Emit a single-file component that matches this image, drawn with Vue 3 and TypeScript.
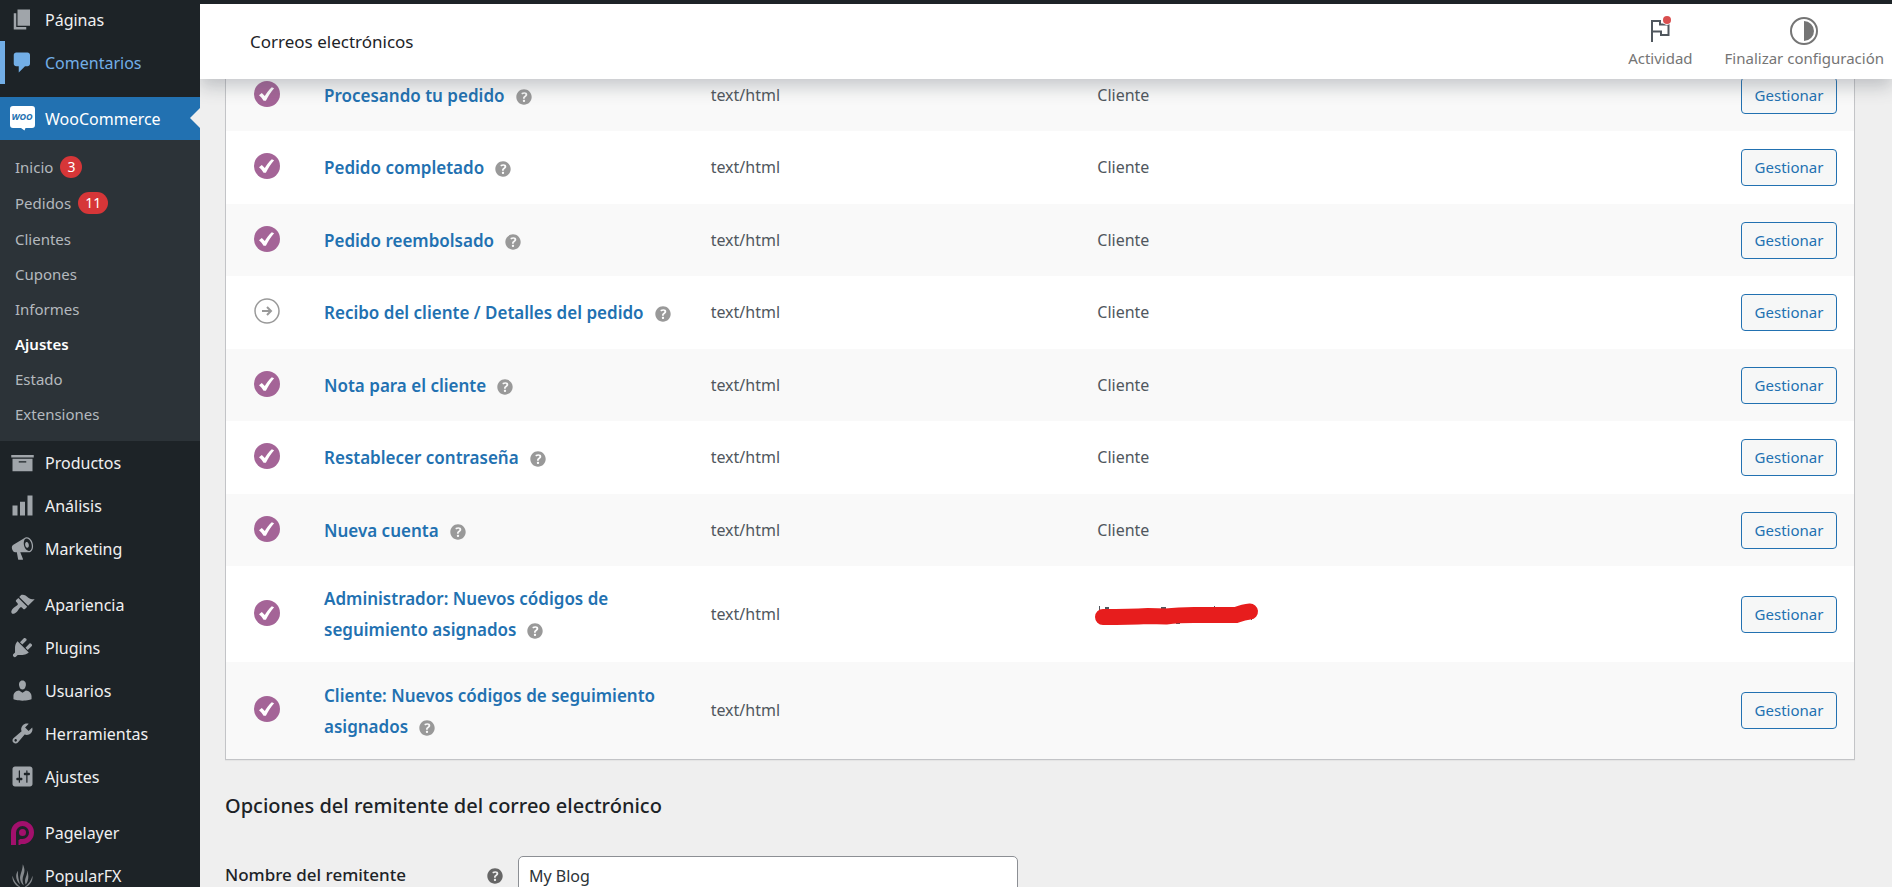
<script setup lang="ts">
import { ref } from 'vue'

interface MenuEntry {
  label: string
  icon: string
  hover?: boolean
  gapBefore?: boolean
}

interface SubEntry {
  label: string
  count?: number
  current?: boolean
}

interface EmailRow {
  name: string
  enabled: boolean
  recipient: 'Cliente' | 'redacted' | ''
}

const icons: Record<string, string> = {
  pages: 'M6 15V2h10v13H6zm-1 1h8v2H3V5h2v11z',
  comments:
    'M5 2h9c1.1 0 2 .9 2 2v7c0 1.1-.9 2-2 2h-2l-5 5v-5H5c-1.1 0-2-.9-2-2V4c0-1.1.9-2 2-2z',
  archive: 'M19 4v2H1V4h18zM2 7h16v10H2V7zm11 3V9H7v1h6z',
  chart: 'M18 18V2h-4v16h4zm-6 0V7H8v11h4zm-6 0v-8H2v8h4z',
  megaphone:
    'M18.15 5.94c.46 1.62.38 3.22-.02 4.48-.42 1.28-1.26 2.18-2.3 2.48-.16.06-.26.06-.4.06-.06.02-.12.02-.18.02-.06.02-.14.02-.22.02h-6.8l2.22 5.5c.02.14-.06.26-.14.34-.08.1-.24.16-.34.16H6.95c-.1 0-.26-.06-.34-.16-.08-.08-.16-.2-.14-.34l-1-5.5H4.25l-.02-.02c-.5.06-1.08-.18-1.54-.62s-.88-1.08-1.06-1.88c-.24-.8-.2-1.56-.02-2.2.18-.62.58-1.08 1.06-1.3l.02-.02 9-5.4c.1-.06.18-.1.24-.16.06-.04.14-.08.24-.12.16-.08.28-.12.5-.18 1.04-.3 2.24.1 3.22.98s1.84 2.24 2.26 3.86zm-2.58 5.98h-.02c.4-.1.74-.34 1.04-.7.58-.7.86-1.76.86-3.04 0-.64-.1-1.3-.28-1.98-.34-1.36-1.02-2.5-1.78-3.24s-1.68-1.1-2.46-.88c-.82.22-1.4.96-1.7 2-.32 1.04-.28 2.36.06 3.72.38 1.36 1 2.5 1.8 3.24.78.74 1.62 1.1 2.48.88zm-2.54-7.08c.22-.04.42-.02.62.04.38.16.76.48 1.02 1s.42 1.2.42 1.78c0 .3-.04.56-.12.8-.18.48-.44.84-.86.94-.34.1-.8-.06-1.14-.4s-.64-.86-.78-1.5c-.18-.62-.12-1.24.02-1.72s.48-.84.82-.94z',
  appearance:
    'M14.48 11.06L7.41 3.99l1.5-1.5c.5-.56 2.3-.47 3.51.32 1.21.8 1.43 1.28 2.91 2.1 1.18.64 2.45 1.26 4.45.85zm-.71.71L6.7 4.7 4.93 6.47c-.39.39-.39 1.02 0 1.41l1.06 1.06c.39.39.39 1.03 0 1.42-.6.6-1.43 1.11-2.21 1.69-.35.26-.7.53-1.01.84C1.43 14.23.4 16.08 1.4 17.07c.99 1 2.84-.03 4.18-1.36.31-.31.58-.66.85-1.02.57-.78 1.08-1.61 1.69-2.21.39-.39 1.02-.39 1.41 0l1.06 1.06c.39.39 1.02.39 1.41 0z',
  plugins:
    'M13.11 4.36L9.87 7.6 8 5.73l3.24-3.24c.35-.34 1.05-.2 1.56.32.52.51.66 1.21.31 1.55zm-8 1.77l.91-1.12 9.01 9.01-1.19.84c-.71.71-2.63 1.16-3.82 1.16H6.14L4.9 17.26c-.59.59-1.54.59-2.12 0-.59-.58-.59-1.53 0-2.12l1.24-1.24v-3.88c0-1.13.4-3.19 1.09-3.89zm7.26 3.97l3.24-3.24c.34-.35 1.04-.21 1.55.31.52.51.66 1.21.31 1.55l-3.24 3.25z',
  users:
    'M10 9.25c-2.27 0-2.73-3.44-2.73-3.44C7 4.02 7.82 2 9.97 2c2.16 0 2.98 2.02 2.71 3.81 0 0-.41 3.44-2.68 3.44zm0 2.57L12.72 10c2.39 0 4.52 2.33 4.52 4.53v2.49s-3.65 1.13-7.24 1.13c-3.65 0-7.24-1.13-7.24-1.13v-2.49c0-2.25 1.94-4.48 4.47-4.48z',
  tools:
    'M16.68 9.77c-1.34 1.34-3.3 1.67-4.95.99l-5.41 6.52c-.99.99-2.59.99-3.58 0s-.99-2.59 0-3.57l6.52-5.42c-.68-1.65-.35-3.61.99-4.95 1.28-1.28 3.12-1.62 4.72-1.06l-2.89 2.89 2.82 2.82 2.86-2.87c.53 1.58.18 3.39-1.08 4.65zM3.81 16.21c.4.39 1.04.39 1.43 0 .4-.4.4-1.04 0-1.43-.39-.4-1.03-.4-1.43 0-.39.39-.39 1.03 0 1.43z',
  settings:
    'M18 16V4c0-1.1-.9-2-2-2H4c-1.1 0-2 .9-2 2v12c0 1.1.9 2 2 2h12c1.1 0 2-.9 2-2zM8 11h1c.55 0 1 .45 1 1s-.45 1-1 1H8v1.5c0 .28-.22.5-.5.5s-.5-.22-.5-.5V13H6c-.55 0-1-.45-1-1s.45-1 1-1h1V5.500c0-.28.22-.5.5-.5s.5.22.5.5V11zm5-2h-1c-.55 0-1-.45-1-1s.45-1 1-1h1V5.500c0-.28.22-.5.5-.5s.5.22.5.5V7h1c.55 0 1 .45 1 1s-.45 1-1 1h-1v5.500c0 .28-.22.5-.5.5s-.5-.22-.5-.5V9z',
  flame:
    'M10.2 1c1.4 2.9 1.9 5.2.7 8.4-1 2.7-1.3 5 .2 8.6-2.7-2.3-3.6-5-2.8-8.3C9 6.8 10.3 4.5 10.2 1zM13.4 5.5c.8 3-.4 4.8-1.1 6.9-.5 1.7-.3 3.2.2 4.8 2.4-2.7 3-7.8.9-11.7zM6.3 6.2c-2.2 3.4-1.8 7.5 1.7 10.9-1.2-3.8-1.8-6.8-1.7-10.9zM2 10.2c-.5 4.3 2.2 8.4 7 9.6-3.2-2.2-5.8-5.3-7-9.6zM18 10.2c.5 4.3-2.2 8.4-7 9.6 3.2-2.2 5.8-5.3 7-9.6z',
}

const helpPath =
  'M17 10c0-3.87-3.14-7-7-7-3.87 0-7 3.13-7 7s3.13 7 7 7c3.86 0 7-3.13 7-7zm-6.3 1.48H9.14v-.43c0-.38.08-.7.24-.98s.46-.57.88-.89c.41-.29.68-.53.81-.71.14-.18.2-.39.2-.62 0-.25-.09-.44-.28-.58-.19-.13-.45-.19-.79-.19-.58 0-1.25.19-2 .57l-.64-1.28c.87-.49 1.8-.74 2.77-.74.81 0 1.45.2 1.92.58.48.39.71.91.71 1.55 0 .43-.09.8-.29 1.11-.19.32-.57.67-1.11 1.06-.38.28-.61.49-.71.63-.1.15-.15.34-.15.57v.35zm-1.47 2.74c-.18-.17-.27-.42-.27-.73 0-.33.08-.58.26-.75s.43-.25.77-.25c.32 0 .57.09.75.26s.27.42.27.74c0 .3-.09.55-.27.72-.18.18-.43.27-.75.27-.33 0-.58-.09-.76-.26z'

const upperMenu: MenuEntry[] = [
  { label: 'Páginas', icon: 'pages' },
  { label: 'Comentarios', icon: 'comments', hover: true },
]

const wooMenu: SubEntry[] = [
  { label: 'Inicio', count: 3 },
  { label: 'Pedidos', count: 11 },
  { label: 'Clientes' },
  { label: 'Cupones' },
  { label: 'Informes' },
  { label: 'Ajustes', current: true },
  { label: 'Estado' },
  { label: 'Extensiones' },
]

const lowerMenu: MenuEntry[] = [
  { label: 'Productos', icon: 'archive' },
  { label: 'Análisis', icon: 'chart' },
  { label: 'Marketing', icon: 'megaphone' },
  { label: 'Apariencia', icon: 'appearance', gapBefore: true },
  { label: 'Plugins', icon: 'plugins' },
  { label: 'Usuarios', icon: 'users' },
  { label: 'Herramientas', icon: 'tools' },
  { label: 'Ajustes', icon: 'settings' },
  { label: 'Pagelayer', icon: 'pagelayer', gapBefore: true },
  { label: 'PopularFX', icon: 'flame' },
]

const emails: EmailRow[] = [
  { name: 'Procesando tu pedido', enabled: true, recipient: 'Cliente' },
  { name: 'Pedido completado', enabled: true, recipient: 'Cliente' },
  { name: 'Pedido reembolsado', enabled: true, recipient: 'Cliente' },
  { name: 'Recibo del cliente / Detalles del pedido', enabled: false, recipient: 'Cliente' },
  { name: 'Nota para el cliente', enabled: true, recipient: 'Cliente' },
  { name: 'Restablecer contraseña', enabled: true, recipient: 'Cliente' },
  { name: 'Nueva cuenta', enabled: true, recipient: 'Cliente' },
  { name: 'Administrador: Nuevos códigos de seguimiento asignados', enabled: true, recipient: 'redacted' },
  { name: 'Cliente: Nuevos códigos de seguimiento asignados', enabled: true, recipient: '' },
]

const senderName = ref('My Blog')
</script>

<template>
  <div class="page">
    <nav class="sidebar">
      <a v-for="m in upperMenu" :key="m.label" href="#" class="item" :class="{ hover: m.hover }">
        <svg class="icon" viewBox="0 0 20 20"><path :d="icons[m.icon]" /></svg>
        <span>{{ m.label }}</span>
      </a>

      <a href="#" class="item gap active">
        <svg class="icon" viewBox="0 0 25 25">
          <path fill="#fff" d="M3 0h19a3 3 0 0 1 3 3v16a3 3 0 0 1-3 3h-6.500l-1 2.500L11 22H3a3 3 0 0 1-3-3V3a3 3 0 0 1 3-3z" />
          <text x="12" y="14" text-anchor="middle" class="woo">WOO</text>
        </svg>
        <span>WooCommerce</span>
      </a>
      <div class="submenu">
        <a v-for="s in wooMenu" :key="s.label" href="#" :class="{ current: s.current, counted: s.count }">
          <span>{{ s.label }}</span>
          <span v-if="s.count" class="badge">{{ s.count }}</span>
        </a>
      </div>

      <a v-for="m in lowerMenu" :key="m.label" href="#" class="item" :class="{ gap: m.gapBefore }">
        <svg v-if="m.icon === 'pagelayer'" class="icon" viewBox="0 0 25 25">
          <path fill="none" stroke="#a2106c" stroke-width="5" d="M3.500 25V12.500a9 9 0 1 1 9 9H9.500" />
          <path fill="none" stroke="#a2106c" stroke-width="2" d="M9.500 25v-5" />
          <circle cx="12.500" cy="12.500" r="3.500" fill="#a2106c" />
        </svg>
        <svg v-else class="icon" :class="m.icon" viewBox="0 0 20 20"><path :d="icons[m.icon]" /></svg>
        <span>{{ m.label }}</span>
      </a>
    </nav>

    <main class="main">
      <header class="header">
        <h1>Correos electrónicos</h1>
        <div class="tabs">
          <button type="button">
            <svg width="28" height="28" viewBox="0 0 28 28">
              <path fill="none" stroke="#50575e" stroke-width="2" d="M6 25V4h8v3.500h8.500V18H15v-3.500H6" />
              <circle cx="21" cy="3" r="5" fill="#fff" />
              <circle cx="21" cy="3" r="4" fill="#d94f4f" />
            </svg>
            <span>Actividad</span>
          </button>
          <button type="button">
            <svg width="28" height="28" viewBox="0 0 28 28">
              <circle cx="14" cy="14" r="13" fill="none" stroke="#757575" stroke-width="2" />
              <path fill="#757575" d="M14 4a10 10 0 0 1 0 20z" />
            </svg>
            <span>Finalizar configuración</span>
          </button>
        </div>
      </header>

      <div class="content">
        <table class="emails">
          <colgroup>
            <col class="c-status" />
            <col class="c-wide" />
            <col class="c-wide" />
            <col class="c-wide" />
            <col />
          </colgroup>
          <tbody>
            <tr v-for="e in emails" :key="e.name">
              <td class="status">
                <svg v-if="e.enabled" viewBox="0 0 26 26">
                  <circle cx="13" cy="13" r="13" fill="#a46497" />
                  <path fill="#fff" d="M5 14.200l2.800-2.300 3 3.200c1.800-3.300 4-6.300 7-8.900l2.300 1.100c-3.400 3.900-5.900 7.900-8.200 12.500h-2.300c-1.300-2.200-2.700-4-4.600-5.600z" />
                </svg>
                <svg v-else viewBox="0 0 26 26">
                  <circle cx="13" cy="13" r="12" fill="none" stroke="#999" stroke-width="1.500" />
                  <path fill="none" stroke="#999" stroke-width="2" d="M8 13h9M13 9l4 4-4 4" />
                </svg>
              </td>
              <td class="name">
                <a href="#">{{ e.name }}</a>
                <svg class="help" viewBox="0 0 20 20"><path :d="helpPath" /></svg>
              </td>
              <td>text/html</td>
              <td>
                <svg v-if="e.recipient === 'redacted'" class="scribble" viewBox="0 0 168 30">
                  <path fill="#50575e" d="M5 7h1v4H5zM11 8h4v3h-4zM67 8h5v2h-5zM120 7h1v3h-1zM82 22h4v3h-4zM157 19h1v2h-1z" />
                  <path fill="none" stroke="#e71d1d" stroke-width="16" stroke-linecap="round" stroke-linejoin="round" d="M9 18Q36 18 54 17L72 17.500Q84 16 100 16H142Q150 13 156 12.500" />
                </svg>
                <template v-else>{{ e.recipient }}</template>
              </td>
              <td class="action"><a href="#" class="manage">Gestionar</a></td>
            </tr>
          </tbody>
        </table>

        <h2>Opciones del remitente del correo electrónico</h2>
        <form class="field" @submit.prevent>
          <label for="sender">Nombre del remitente</label>
          <svg class="help dark" viewBox="0 0 20 20"><path :d="helpPath" /></svg>
          <input id="sender" v-model="senderName" type="text" />
        </form>
      </div>
    </main>
  </div>
</template>

<style>
body {
  margin: 0;
  background: #efefef;
}
</style>

<style scoped>
.page {
  display: flex;
  height: 100vh;
  overflow: hidden;
  background: #efefef;
  font-family: "Noto Sans", "Open Sans", sans-serif;
  font-size: 16px;
  color: #50575e;
}
a {
  text-decoration: none;
}
.sidebar {
  position: relative;
  z-index: 3;
  flex: none;
  width: 200px;
  margin-top: -2px;
  background: #1d2327;
}
.item {
  display: flex;
  align-items: center;
  gap: 10px;
  height: 43px;
  box-sizing: border-box;
  padding-left: 10px;
  color: #f0f0f1;
}
.icon {
  flex: none;
  width: 25px;
  height: 25px;
  fill: #a0a5aa;
  overflow: visible;
}
.icon.flame {
  fill: #85898d;
}
.gap {
  margin-top: 13px;
}
.hover {
  color: #72aee6;
  box-shadow: inset 5px 0 #72aee6;
}
.hover .icon {
  fill: #72aee6;
}
.active {
  position: relative;
  background: #2271b1;
  color: #fff;
}
.active::after {
  content: "";
  position: absolute;
  right: 0;
  top: 11px;
  border: 10px solid transparent;
  border-left: 0;
  border-right-color: #efefef;
}
.woo {
  font-size: 9px;
  font-weight: 700;
  font-style: italic;
  fill: #2271b1;
}
.submenu {
  padding: 9px 0 10px;
  background: #2c3338;
  font-size: 15px;
}
.submenu a {
  display: flex;
  align-items: center;
  gap: 7px;
  height: 35px;
  padding-left: 15px;
  color: #b4b9be;
}
.submenu a.counted {
  height: 36px;
}
.submenu a.current {
  color: #fff;
  font-weight: 600;
}
.badge {
  box-sizing: border-box;
  min-width: 22px;
  padding: 0 7px;
  border-radius: 11px;
  background: #d63638;
  color: #fff;
  font-size: 14px;
  line-height: 22px;
  text-align: center;
}
.main {
  flex: 1;
  min-width: 0;
}
.header {
  position: relative;
  z-index: 2;
  display: flex;
  align-items: center;
  justify-content: space-between;
  height: 79px;
  box-sizing: border-box;
  padding: 0 8px 0 50px;
  border-top: 4px solid #1d2327;
  background: #fff;
  box-shadow: 0 8px 16px rgba(85, 93, 102, 0.3);
}
h1 {
  margin: 0;
  font-size: 17px;
  font-weight: 400;
  color: #1d2327;
}
.tabs {
  display: flex;
  gap: 32px;
  padding-top: 2px;
}
.tabs button {
  display: flex;
  flex-direction: column;
  align-items: center;
  gap: 2px;
  padding: 0;
  border: 0;
  background: none;
  color: #757575;
  font: inherit;
  font-size: 15px;
  line-height: 22px;
}
.tabs svg {
  overflow: visible;
}
.content {
  margin-top: -20px;
  padding: 0 37px 0 25px;
}
.emails {
  width: 100%;
  table-layout: fixed;
  border-collapse: separate;
  border-spacing: 0;
  border: 1px solid #c3c4c7;
  border-top: 0;
  background: #fff;
  box-shadow: 0 1px 1px rgba(0, 0, 0, 0.04);
}
.c-status {
  width: 98px;
}
.c-wide {
  width: 23.75%;
}
tr {
  height: 73px;
}
tr:nth-child(odd) {
  height: 72px;
  background: #f9f9f9;
}
tr:nth-child(n + 8) {
  height: 96px;
}
tr:last-child {
  height: 97px;
}
td {
  padding: 0;
  vertical-align: middle;
  line-height: 31px;
}
.status {
  padding-bottom: 3px;
}
.status svg {
  display: block;
  width: 26px;
  height: 26px;
  margin-left: 28px;
}
.name {
  padding-right: 16px;
  font-size: 17px;
}
.name a {
  font-weight: 600;
  color: #2271b1;
}
.help {
  width: 22px;
  height: 22px;
  fill: #999;
  vertical-align: middle;
}
.name .help {
  margin-left: 8px;
}
.scribble {
  display: block;
  width: 168px;
  height: 30px;
  margin-left: -3px;
}
.action {
  padding-right: 17px;
  text-align: right;
}
.manage {
  display: inline-block;
  box-sizing: border-box;
  width: 96px;
  border: 1px solid #2271b1;
  border-radius: 4px;
  background: #f6f7f7;
  color: #2271b1;
  font-size: 15px;
  line-height: 35px;
  text-align: center;
  vertical-align: middle;
}
h2 {
  margin: 30px 0 34px;
  font-size: 20px;
  font-weight: 500;
  line-height: 32px;
  color: #1d2327;
}
.field {
  display: flex;
  align-items: center;
}
.field label {
  width: 259px;
  padding-bottom: 4px;
  font-size: 17px;
  font-weight: 500;
  color: #1d2327;
}
.help.dark {
  fill: #666;
}
.field input {
  width: 500px;
  height: 40px;
  box-sizing: border-box;
  margin-left: 12px;
  padding: 0 10px;
  border: 1px solid #8c8f94;
  border-radius: 5px;
  background: #fff;
  color: #2c3338;
  font: inherit;
}
</style>
